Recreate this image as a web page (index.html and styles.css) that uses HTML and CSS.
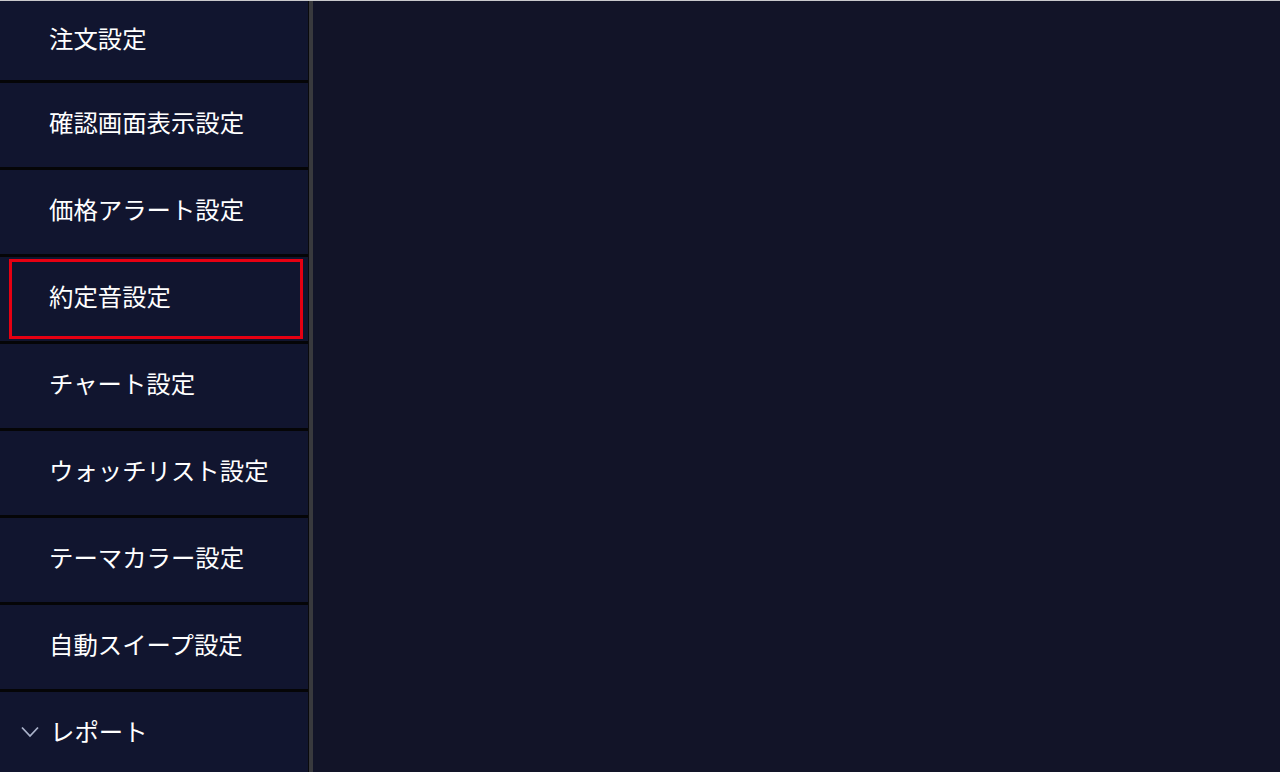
FILE: index.html
```html
<!DOCTYPE html>
<html lang="ja">

<head>
    <meta charset="UTF-8">
    <title>設定</title>
    <link rel="stylesheet" href="styles.css">
</head>

<body>
    <div class="layout">
        <!-- 設定メニュー -->
        <ul class="menu">
            <li class="menu-item first">注文設定</li>
            <li class="menu-item">確認画面表示設定</li>
            <li class="menu-item">価格アラート設定</li>
            <li class="menu-item marked">約定音設定</li>
            <li class="menu-item">チャート設定</li>
            <li class="menu-item">ウォッチリスト設定</li>
            <li class="menu-item">テーマカラー設定</li>
            <li class="menu-item">自動スイープ設定</li>
            <li class="menu-item group">
                <svg class="chevron" width="18" height="12" viewBox="0 0 18 12">
                    <path d="M1 1.5 L9 10 L17 1.5" fill="none" stroke="#aab2ca" stroke-width="1.8" />
                </svg>
                レポート
            </li>
        </ul>
        <div class="divider"></div>
        <div class="content"></div>
    </div>
</body>

</html>
```

FILE: styles.css
```css
body {
    margin: 0;
    background-color: #121428;
    font-family: "Noto Sans CJK JP", "Noto Sans", sans-serif;
    height: 100vh;
    overflow: hidden;
}

.layout {
    display: flex;
    height: 100%;
    border-top: 1px solid #c9c9cc;
    box-sizing: border-box;
}

.menu {
    list-style: none;
    margin: 0;
    padding: 0;
    width: 308px;
    flex-shrink: 0;
    background-color: #050507;
}

.menu-item {
    position: relative;
    display: flex;
    align-items: center;
    height: 77px;
    padding: 0 0 7px 49px;
    background-color: #11152f;
    color: #fff;
    font-size: 24.4px;
    border-bottom: 3px solid #050507;
}

.menu-item.first {
    height: 72px;
}

.menu-item.group {
    padding-left: 21px;
    border-bottom: none;
}

.chevron {
    margin-right: 11px;
    margin-top: 2px;
}

/* 赤枠 */
.menu-item.marked::after {
    content: "";
    position: absolute;
    top: 2px;
    left: 9px;
    right: 5px;
    bottom: 2px;
    border: 3px solid #e60012;
}

.divider {
    width: 1px;
    background-color: #0a0a0c;
}

.divider + .content {
    border-left: 4px solid #38393d;
}

.content {
    flex: 1;
    background-color: #121428;
}
```
